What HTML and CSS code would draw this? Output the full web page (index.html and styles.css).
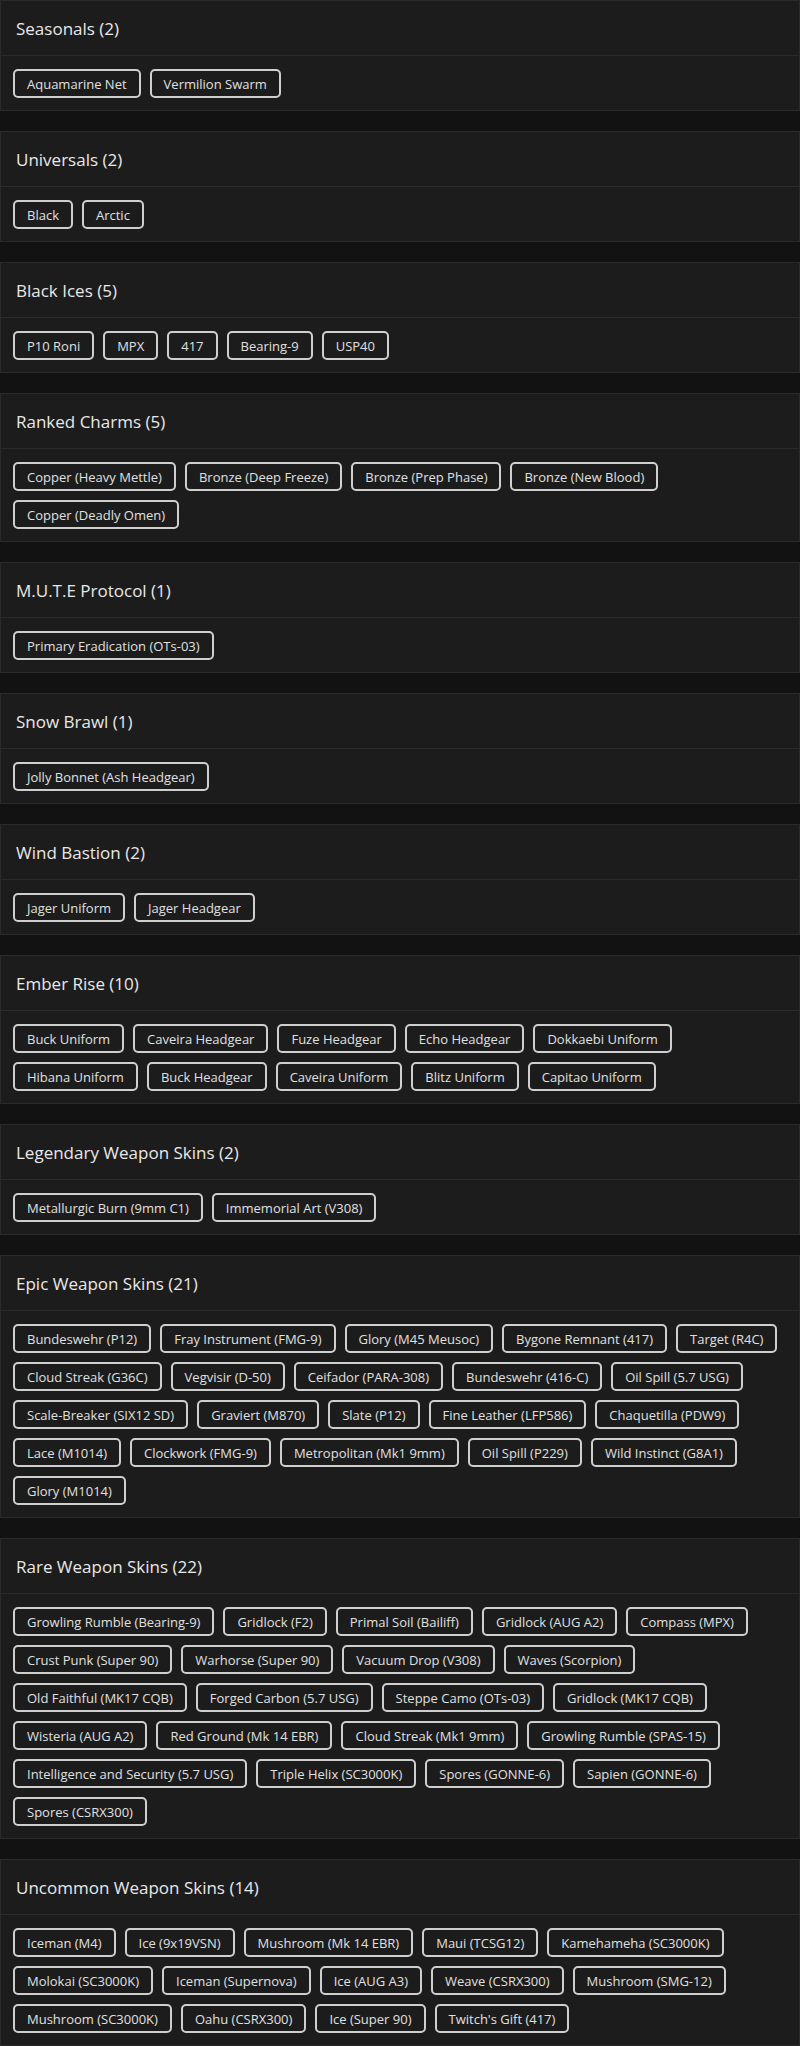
FILE: index.html
```html
<!DOCTYPE html>
<html lang="en">
<head>
<meta charset="UTF-8">
<meta name="viewport" content="width=device-width, initial-scale=1.0">
<title>Collection</title>
<link rel="stylesheet" href="styles.css">
</head>
<body>
<div class="card">
    <div class="card-header">Seasonals (2)</div>
    <div class="card-body">
        <button class="item">Aquamarine Net</button>
        <button class="item">Vermilion Swarm</button>
    </div>
</div>
<div class="card">
    <div class="card-header">Universals (2)</div>
    <div class="card-body">
        <button class="item">Black</button>
        <button class="item">Arctic</button>
    </div>
</div>
<div class="card">
    <div class="card-header">Black Ices (5)</div>
    <div class="card-body">
        <button class="item">P10 Roni</button>
        <button class="item">MPX</button>
        <button class="item">417</button>
        <button class="item">Bearing-9</button>
        <button class="item">USP40</button>
    </div>
</div>
<div class="card">
    <div class="card-header">Ranked Charms (5)</div>
    <div class="card-body">
        <button class="item">Copper (Heavy Mettle)</button>
        <button class="item">Bronze (Deep Freeze)</button>
        <button class="item">Bronze (Prep Phase)</button>
        <button class="item">Bronze (New Blood)</button>
        <button class="item">Copper (Deadly Omen)</button>
    </div>
</div>
<div class="card">
    <div class="card-header">M.U.T.E Protocol (1)</div>
    <div class="card-body">
        <button class="item">Primary Eradication (OTs-03)</button>
    </div>
</div>
<div class="card">
    <div class="card-header">Snow Brawl (1)</div>
    <div class="card-body">
        <button class="item">Jolly Bonnet (Ash Headgear)</button>
    </div>
</div>
<div class="card">
    <div class="card-header">Wind Bastion (2)</div>
    <div class="card-body">
        <button class="item">Jager Uniform</button>
        <button class="item">Jager Headgear</button>
    </div>
</div>
<div class="card">
    <div class="card-header">Ember Rise (10)</div>
    <div class="card-body">
        <button class="item">Buck Uniform</button>
        <button class="item">Caveira Headgear</button>
        <button class="item">Fuze Headgear</button>
        <button class="item">Echo Headgear</button>
        <button class="item">Dokkaebi Uniform</button>
        <button class="item">Hibana Uniform</button>
        <button class="item">Buck Headgear</button>
        <button class="item">Caveira Uniform</button>
        <button class="item">Blitz Uniform</button>
        <button class="item">Capitao Uniform</button>
    </div>
</div>
<div class="card">
    <div class="card-header">Legendary Weapon Skins (2)</div>
    <div class="card-body">
        <button class="item">Metallurgic Burn (9mm C1)</button>
        <button class="item">Immemorial Art (V308)</button>
    </div>
</div>
<div class="card">
    <div class="card-header">Epic Weapon Skins (21)</div>
    <div class="card-body">
        <button class="item">Bundeswehr (P12)</button>
        <button class="item">Fray Instrument (FMG-9)</button>
        <button class="item">Glory (M45 Meusoc)</button>
        <button class="item">Bygone Remnant (417)</button>
        <button class="item">Target (R4C)</button>
        <button class="item">Cloud Streak (G36C)</button>
        <button class="item">Vegvisir (D-50)</button>
        <button class="item">Ceifador (PARA-308)</button>
        <button class="item">Bundeswehr (416-C)</button>
        <button class="item">Oil Spill (5.7 USG)</button>
        <button class="item">Scale-Breaker (SIX12 SD)</button>
        <button class="item">Graviert (M870)</button>
        <button class="item">Slate (P12)</button>
        <button class="item">Fine Leather (LFP586)</button>
        <button class="item">Chaquetilla (PDW9)</button>
        <button class="item">Lace (M1014)</button>
        <button class="item">Clockwork (FMG-9)</button>
        <button class="item">Metropolitan (Mk1 9mm)</button>
        <button class="item">Oil Spill (P229)</button>
        <button class="item">Wild Instinct (G8A1)</button>
        <button class="item">Glory (M1014)</button>
    </div>
</div>
<div class="card">
    <div class="card-header">Rare Weapon Skins (22)</div>
    <div class="card-body">
        <button class="item">Growling Rumble (Bearing-9)</button>
        <button class="item">Gridlock (F2)</button>
        <button class="item">Primal Soil (Bailiff)</button>
        <button class="item">Gridlock (AUG A2)</button>
        <button class="item">Compass (MPX)</button>
        <button class="item">Crust Punk (Super 90)</button>
        <button class="item">Warhorse (Super 90)</button>
        <button class="item">Vacuum Drop (V308)</button>
        <button class="item">Waves (Scorpion)</button>
        <button class="item">Old Faithful (MK17 CQB)</button>
        <button class="item">Forged Carbon (5.7 USG)</button>
        <button class="item">Steppe Camo (OTs-03)</button>
        <button class="item">Gridlock (MK17 CQB)</button>
        <button class="item">Wisteria (AUG A2)</button>
        <button class="item">Red Ground (Mk 14 EBR)</button>
        <button class="item">Cloud Streak (Mk1 9mm)</button>
        <button class="item">Growling Rumble (SPAS-15)</button>
        <button class="item">Intelligence and Security (5.7 USG)</button>
        <button class="item">Triple Helix (SC3000K)</button>
        <button class="item">Spores (GONNE-6)</button>
        <button class="item">Sapien (GONNE-6)</button>
        <button class="item">Spores (CSRX300)</button>
    </div>
</div>
<div class="card">
    <div class="card-header">Uncommon Weapon Skins (14)</div>
    <div class="card-body">
        <button class="item">Iceman (M4)</button>
        <button class="item">Ice (9x19VSN)</button>
        <button class="item">Mushroom (Mk 14 EBR)</button>
        <button class="item">Maui (TCSG12)</button>
        <button class="item">Kamehameha (SC3000K)</button>
        <button class="item">Molokai (SC3000K)</button>
        <button class="item">Iceman (Supernova)</button>
        <button class="item">Ice (AUG A3)</button>
        <button class="item">Weave (CSRX300)</button>
        <button class="item">Mushroom (SMG-12)</button>
        <button class="item">Mushroom (SC3000K)</button>
        <button class="item">Oahu (CSRX300)</button>
        <button class="item">Ice (Super 90)</button>
        <button class="item">Twitch's Gift (417)</button>
    </div>
</div>
</body>
</html>
```

FILE: styles.css
```css
body {
    margin: 0;
    background-color: #121212;
    color: #e2e2e2;
    font-family: "Open Sans", Lato, sans-serif;
}

.card {
    background-color: #1c1c1c;
    border: 1px solid #2b2b2b;
    margin-bottom: 20px;
}

.card-header {
    display: flex;
    align-items: center;
    height: 54px;
    padding: 0 15px;
    border-bottom: 1px solid #2b2b2b;
    font-size: 17px;
    font-weight: 500;
    color: #e8e8e8;
}

.card-body {
    display: flex;
    flex-wrap: wrap;
    gap: 9px;
    padding: 13px 12px 12px;
}

.item {
    height: 29px;
    padding: 0 12px;
    background-color: #1c1c1c;
    color: #e0e0e0;
    border: 2px solid #cfcfcf;
    border-radius: 5px;
    font-family: inherit;
    font-size: 13px;
    cursor: pointer;
}

.item:hover {
    background-color: #2a2a2a;
}
```
